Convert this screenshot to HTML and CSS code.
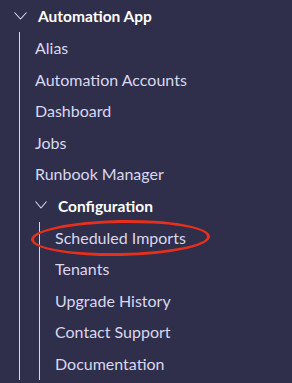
FILE: index.html
```html
<!DOCTYPE html>
<html lang="en">
<head>
    <meta charset="UTF-8">
    <meta name="viewport" content="width=device-width, initial-scale=1.0">
    <title>Automation App</title>
    <link rel="stylesheet" href="styles.css">
</head>
<body>
    <nav class="tree">
        <div class="node-header">
            <svg class="chevron" width="13" height="8" viewBox="0 0 13 8"><polyline points="0.5,0.5 6.5,7 12.5,0.5" fill="none" stroke="#d8d7ee" stroke-width="1.1"/></svg>
            <span class="header-label">Automation App</span>
        </div>
        <ul class="children">
            <li class="item">Alias</li>
            <li class="item">Automation Accounts</li>
            <li class="item">Dashboard</li>
            <li class="item">Jobs</li>
            <li class="item">Runbook Manager</li>
            <li>
                <div class="node-header sub">
                    <svg class="chevron" width="12" height="8" viewBox="0 0 12 8"><polyline points="0.5,0.5 6,7 11.5,0.5" fill="none" stroke="#d8d7ee" stroke-width="1.1"/></svg>
                    <span class="header-label">Configuration</span>
                </div>
                <ul class="children inner">
                    <li class="item highlighted">Scheduled Imports<span class="circle"></span></li>
                    <li class="item">Tenants</li>
                    <li class="item">Upgrade History</li>
                    <li class="item">Contact Support</li>
                    <li class="item">Documentation</li>
                </ul>
            </li>
        </ul>
    </nav>
</body>
</html>
```

FILE: styles.css
```css
body {
    margin: 0;
    background: #2f2e4b;
    font-family: 'Lato', 'Noto Sans', sans-serif;
    height: 383px;
    overflow: hidden;
}
.node-header {
    display: flex;
    align-items: center;
    height: 32px;
    padding-left: 14px;
}
.node-header .chevron {
    margin-right: 11px;
    margin-top: -1px;
}
.header-label {
    color: #ffffff;
    font-weight: bold;
    font-size: 15.5px;
}
.node-header.sub {
    padding-left: 0;
    height: 31.6px;
}
.children {
    list-style: none;
    margin: 0 0 0 19px;
    padding: 0 0 0 15px;
    border-left: 1.5px solid #d6d5ec;
}
.children.inner {
    margin-left: 4px;
    padding-left: 15px;
}
.item {
    height: 31.6px;
    line-height: 31.6px;
    color: #d9d8ef;
    font-size: 16px;
    white-space: nowrap;
}
.highlighted {
    position: relative;
}
.circle {
    position: absolute;
    left: -24px;
    top: -2px;
    width: 173px;
    height: 30px;
    border: 3px solid #e6301c;
    border-radius: 50%;
    transform: rotate(-1deg);
}
```
